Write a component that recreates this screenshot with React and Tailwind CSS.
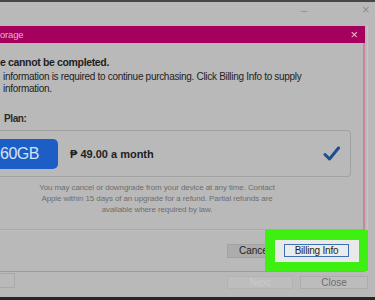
export default function App() {
  return (
    <div className="w-[375px] h-[300px] overflow-hidden bg-[#b9b9b9] relative flex flex-col font-['Liberation_Sans',Arial,sans-serif] text-[#1e1e1e]">
      {/* top dark strip */}
      <div className="h-[2px] bg-[#474747] shrink-0" />
      {/* outer window title row */}
      <div className="h-[24px] shrink-0 flex items-start pt-[2px]">
        <span className="ml-[301px] w-[9px] text-[11px] leading-[12px] text-[#8d8d8d]">–</span>
        <span className="ml-[52px] text-[13px] leading-[12px] text-[#8d8d8d]">×</span>
      </div>
      {/* main row */}
      <div className="h-[246px] shrink-0 flex">
        {/* dialog */}
        <div className="w-[365px] flex flex-col">
          <div className="h-[17px] bg-[#a6005f] flex items-center justify-between pr-[7px]">
            <span className="text-[9.5px] leading-[12px] text-[#e2b3cd] tracking-[-0.2px]">orage</span>
            <span className="text-[13px] leading-[12px] text-[#e9bfd6]">×</span>
          </div>
          <div className="flex-1 border-r-[2px] border-b border-[#c9859f] flex flex-col">
            <div className="mt-[13px] h-[12px] text-[10.5px] leading-[12px] font-bold tracking-[-0.35px]">e cannot be completed.</div>
            <div className="mt-[3px] pl-[3px] text-[10px] leading-[12px] tracking-[-0.3px] text-[#232323]">
              <div>information is required to continue purchasing. Click Billing Info to supply</div>
              <div>information.</div>
            </div>
            <div className="mt-[18px] pl-[4px] h-[12px] text-[10px] leading-[12px] font-bold tracking-[-0.4px] text-[#2a2a2a]">Plan:</div>
            <div className="mt-[5px] w-[351px] h-[47px] border border-l-0 border-[#a2a2a2] rounded-r-[4px] flex items-center">
              <div className="-ml-[10px] w-[68px] h-[30px] bg-[#1c5ec6] rounded-[5px] flex items-center pl-[10px]">
                <span className="text-[16px] leading-[18px] text-[#d3e2f6] tracking-[-0.5px]">60GB</span>
              </div>
              <span className="ml-[12px] text-[11px] leading-[12px] font-bold text-[#1e1e1e]">₱ 49.00 a month</span>
              <svg className="ml-auto mr-[10px]" width="17" height="15" viewBox="0 0 17 15">
                <path d="M2 8.5 L6.5 13 L15.5 2" fill="none" stroke="#1f4d8e" strokeWidth="3" strokeLinecap="round" strokeLinejoin="round" />
              </svg>
            </div>
            <div className="mt-[5px] w-[314px] text-center text-[8px] leading-[11px] tracking-[-0.1px] text-[#6e6e6e]">
              <div>You may cancel or downgrade from your device at any time. Contact</div>
              <div>Apple within 15 days of an upgrade for a refund. Partial refunds are</div>
              <div>available where required by law.</div>
            </div>
            <div className="mt-[14px] border-t border-[#a7a7a7]" />
            <div className="border-t border-[#c2c2c2]" />
            <div className="flex mt-[13px]">
              <div className="ml-[227px] w-[44px] h-[14px] bg-[#acacac] border border-[#a2a2a2] flex items-center pl-[11px] text-[10px] leading-[12px] text-[#1e1e1e]">Cancel</div>
            </div>
          </div>
        </div>
        {/* outer window right strip */}
        <div className="flex-1 flex">
          <div className="ml-[2px] w-px bg-[#c6c6c6]" />
        </div>
      </div>
      {/* outer window footer */}
      <div className="h-[25px] shrink-0 flex items-start">
        <div className="mt-[1px] w-[15px] h-[15px] border border-[#a9a9a9] border-l-0" />
        <div className="mt-[4px] ml-[212px] w-[66px] h-[13px] bg-[#bdbdbd] border border-[#b3b3b3] flex items-center justify-center text-[10px] leading-[12px] text-[#cacaca]">Next</div>
        <div className="mt-[4px] ml-[7px] w-[68px] h-[13px] bg-[#bcbcbc] border border-[#acacac] flex items-center justify-center text-[10px] leading-[12px] text-[#6d6d6d]">Close</div>
      </div>
      {/* bottom dark strip */}
      <div className="flex-1 bg-[#262626]" />

      {/* green highlight overlay */}
      <div className="absolute left-[265px] top-[230px] w-[103px] h-[41px] bg-[#3ef012] flex items-center justify-center">
        <div className="w-[84px] h-[22px] bg-[#e9e9e9] flex items-center justify-center">
          <div className="w-[65px] h-[13px] border border-[#3c6fb3] bg-[#ececec] flex items-center justify-center text-[10px] leading-[12px] tracking-[-0.2px] text-[#1e1e1e]">Billing Info</div>
        </div>
      </div>
    </div>
  );
}
